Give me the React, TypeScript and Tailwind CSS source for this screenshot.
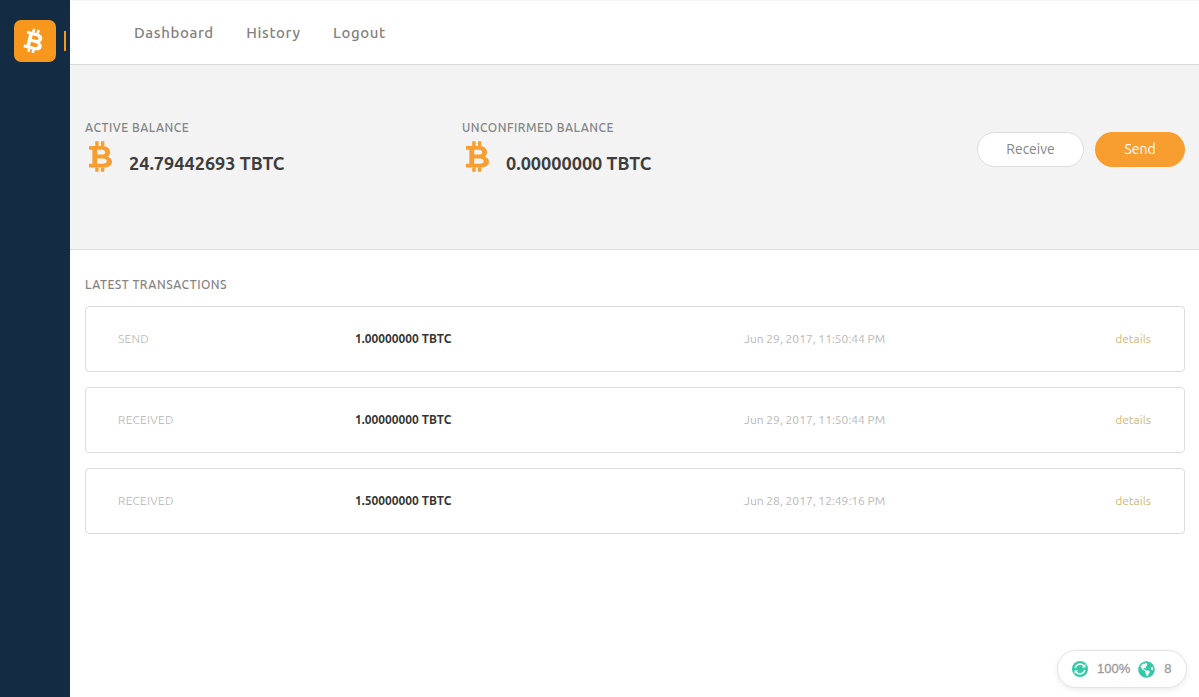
import React from "react";
import { FaGlobeAmericas } from "react-icons/fa";

const font = "font-['Ubuntu','Noto_Sans',sans-serif]";

const txs = [
  { type: "SEND", amount: "1.00000000 TBTC", date: "Jun 29, 2017, 11:50:44 PM" },
  { type: "RECEIVED", amount: "1.00000000 TBTC", date: "Jun 29, 2017, 11:50:44 PM" },
  { type: "RECEIVED", amount: "1.50000000 TBTC", date: "Jun 28, 2017, 12:49:16 PM" },
];

function BtcIcon({ className }: { className: string }) {
  return (
    <svg viewBox="0 0 24 32" className={className} fill="currentColor" fillRule="evenodd">
      <path d="M0 5H14C19 5 22 8 22 11.5C22 13.5 21 15 19.5 16C22 17 24 19 24 21.5C24 25 21 27.5 15 27.5H0V23.5H3.5V9H0ZM8.5 9V14H13.5C15.5 14 17 13 17 11.5C17 10 15.5 9 13.5 9ZM8.5 18V23.5H14.5C17 23.5 18.5 22.5 18.5 20.7C18.5 19 17 18 14.5 18Z" />
      <path d="M6.5 0H10V5H6.5ZM12.5 0H16V5H12.5ZM6.5 27.5H10V32H6.5ZM12.5 27.5H16V32H12.5Z" />
    </svg>
  );
}

function SyncIcon() {
  return (
    <svg viewBox="0 0 16 16" className="w-[16px] h-[16px] shrink-0">
      <circle cx="8" cy="8" r="8" fill="#33c9a5" />
      <path d="M3.2 7A5 5 0 0 1 12 5M12.8 9A5 5 0 0 1 4 11" fill="none" stroke="#fff" strokeWidth="1.5" />
      <path d="M13.4 3V6.6H9.8ZM2.6 13V9.4H6.2Z" fill="#fff" />
    </svg>
  );
}

function Balance({ label, value, width }: { label: string; value: string; width: string }) {
  return (
    <div className={width}>
      <p className="text-[12px] leading-[14px] font-medium tracking-[0.5px] text-[#848484]">{label}</p>
      <div className="flex items-start mt-[1px]">
        <BtcIcon className="text-[#f89d2f] w-[23px] h-[31px] ml-[4px] mt-[5px] shrink-0" />
        <span className="ml-[17px] mt-[15px] text-[18.1px] leading-[24px] font-semibold text-[#3d3d3d]">{value}</span>
      </div>
    </div>
  );
}

export default function App() {
  return (
    <div className={`${font} flex h-[697px] w-[1199px] overflow-hidden bg-white relative`}>
      <aside className="w-[70px] shrink-0 bg-[#132b43] flex items-start pt-[20px] pl-[14px]">
        <div className="w-[42px] h-[42px] rounded-[7px] bg-[#f8971d] flex items-center justify-center">
          <BtcIcon className="text-white w-[18px] h-[24px] rotate-[14deg] mr-[3px]" />
        </div>
        <div className="w-[2px] h-[20px] bg-[#f8971d] ml-[8px] mt-[11px]" />
      </aside>

      <main className="flex-1 flex flex-col">
        <nav className="h-[65px] border-t border-t-[#f5f5f5] border-b border-b-[#dcdcdc] flex items-center pl-[64px] pt-[1px] gap-[32.5px]">
          <a className="text-[15px] font-medium text-[#85807f] tracking-[0.6px]">Dashboard</a>
          <a className="text-[15px] font-medium text-[#85807f] tracking-[0.6px]">History</a>
          <a className="text-[15px] font-medium text-[#85807f] tracking-[0.6px]">Logout</a>
        </nav>

        <section className="h-[185px] bg-[#f3f3f3] border-b border-[#dcdcdc] flex items-start pl-[15px] pr-[14px] pt-[56px]">
          <Balance label="ACTIVE BALANCE" value="24.79442693 TBTC" width="w-[377px]" />
          <Balance label="UNCONFIRMED BALANCE" value="0.00000000 TBTC" width="w-[377px]" />
          <div className="ml-auto flex gap-[11px] mt-[11px]">
            <button className="w-[107px] h-[35px] rounded-full bg-white border border-[#dcdcdc] text-[14px] text-[#858585]">Receive</button>
            <button className="w-[90px] h-[35px] rounded-full bg-[#f89d2f] text-[14px] text-white">Send</button>
          </div>
        </section>

        <section className="pl-[15px] pr-[14px] pt-[27px]">
          <h2 className="text-[12px] leading-[16px] font-medium tracking-[0.5px] text-[#848484]">LATEST TRANSACTIONS</h2>
          <div className="mt-[13px] flex flex-col gap-[15px]">
            {txs.map((tx, i) => (
              <div key={i} className="h-[66px] rounded-[4px] border border-[#dcdcdc] flex items-center pl-[32px] pr-[33px] text-[12px]">
                <span className="w-[237px] font-light tracking-[0.3px] text-[#b4b4b4]">{tx.type}</span>
                <span className="w-[389px] font-semibold text-[#333333]">{tx.amount}</span>
                <span className="text-[#b8b8b8]">{tx.date}</span>
                <a className="ml-auto text-[#d0b97c]">details</a>
              </div>
            ))}
          </div>
        </section>
      </main>

      <div className="absolute left-[1057px] top-[650px] w-[130px] h-[38px] rounded-full bg-white border border-[#e4e4e4] shadow-[0_2px_6px_rgba(0,0,0,0.08)] flex items-center pl-[14px] font-['Liberation_Sans',sans-serif] text-[13px] text-[#9a9a9a] [-webkit-text-stroke:0.3px_#9a9a9a]">
        <SyncIcon />
        <span className="ml-[9px]">100%</span>
        <FaGlobeAmericas className="ml-[8px] text-[#33c9a5] text-[17px]" />
        <span className="ml-[9px]">8</span>
      </div>
    </div>
  );
}
